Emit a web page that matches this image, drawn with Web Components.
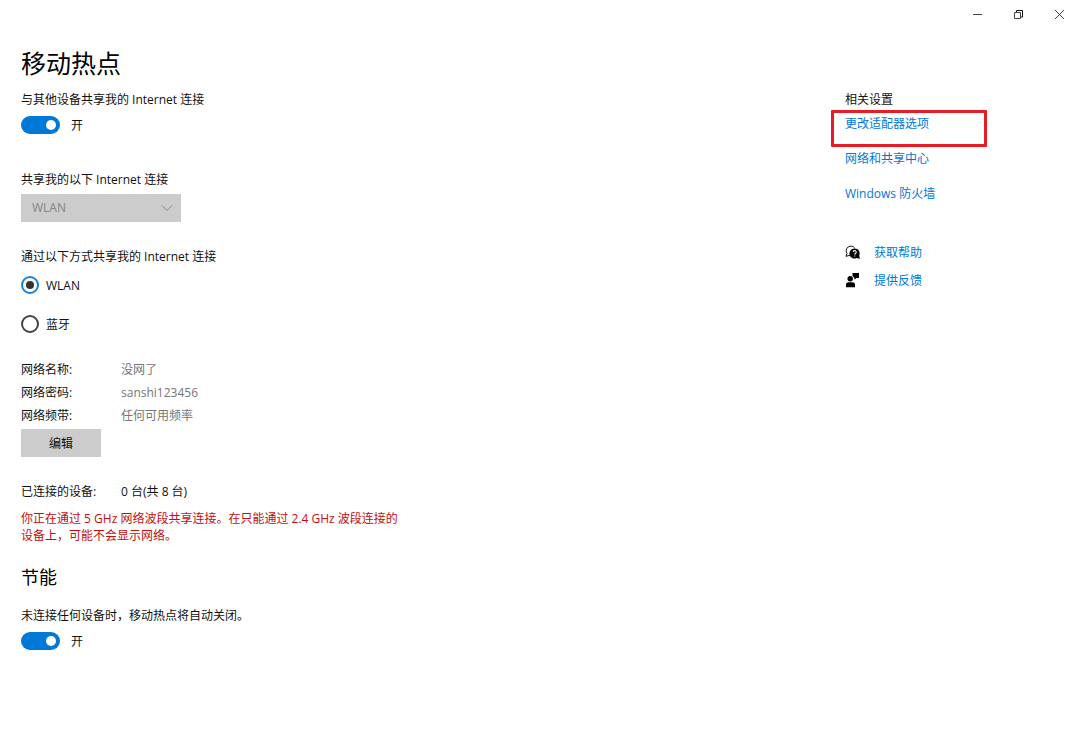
<!DOCTYPE html>
<html lang="zh-CN">
<head>
<meta charset="utf-8">
<meta name="viewport" content="width=device-width, initial-scale=1">
<title>移动热点</title>
<style>
  body { margin: 0; background: #fff; color: #111; font: 12px/16px "Open Sans", "Noto Sans CJK SC", sans-serif; }
</style>
</head>
<body>
<hotspot-page></hotspot-page>
<script>
const define = (name, html, setup) => customElements.define(name, class extends HTMLElement {
  connectedCallback() {
    if (this.shadowRoot) return;
    this.attachShadow({ mode: 'open' }).innerHTML = html;
    if (setup) setup(this, this.shadowRoot);
  }
});

define('window-bar', `
  <style>
    :host { display: flex; justify-content: flex-end; height: 28px; }
    button { width: 41px; padding: 0; border: 0; background: none; display: grid; place-items: center; }
    svg { display: block; fill: none; stroke: #444; }
  </style>
  <button aria-label="最小化"><svg width="11" height="11"><path d="M1 5.500h9"/></svg></button>
  <button aria-label="还原"><svg width="11" height="11"><path d="M1.500 3.500h6v6h-6z"/><path d="M3.500 3V1.500h6v6.500H8" stroke="#111"/></svg></button>
  <button aria-label="关闭"><svg width="11" height="11"><path d="M1 1l9 9M10 1l-9 9"/></svg></button>
`);

define('toggle-switch', `
  <style>
    :host { display: block; }
    .title { display: block; margin-bottom: 8px; }
    .row { display: flex; align-items: center; gap: 11px; height: 18px; }
    .state { padding-top: 2px; }
    input { appearance: none; width: 39px; height: 18px; margin: 0; border-radius: 9px; background: #999; display: flex; align-items: center; padding: 0 4px; box-sizing: border-box; }
    input::before { content: ""; width: 10px; height: 10px; border-radius: 50%; background: #fff; }
    input:checked { background: #0078d7; justify-content: flex-end; }
  </style>
  <label class="title" for="s"><slot></slot></label>
  <div class="row"><input id="s" type="checkbox" role="switch" checked><span class="state">开</span></div>
`);

define('drop-down', `
  <style>
    :host { display: block; }
    label { display: block; margin-bottom: 6px; }
    .box { display: grid; width: 160px; align-items: center; background: #ccc; }
    select, svg { grid-area: 1 / 1; }
    select { appearance: none; width: 100%; height: 28px; border: 0; border-radius: 0; padding: 0 11px; background: none; color: #858585; font: inherit; opacity: 1; }
    svg { justify-self: end; margin-right: 8px; fill: none; stroke: #8a8a8a; pointer-events: none; }
  </style>
  <label for="c"><slot></slot></label>
  <div class="box">
    <select id="c" disabled><option>WLAN</option></select>
    <svg width="12" height="8"><path d="M1 1.500l5 5 5-5"/></svg>
  </div>
`);

define('radio-group', `
  <style>
    :host { display: block; }
    fieldset { border: 0; margin: 0; padding: 0; min-width: 0; }
    legend { padding: 0; margin-bottom: 11px; }
    label { display: flex; align-items: center; gap: 7px; height: 18px; }
    label + label { margin-top: 21px; }
    span { padding-top: 2px; }
    input { appearance: none; width: 18px; height: 18px; margin: 0; box-sizing: border-box; border: 2px solid #444; border-radius: 50%; display: grid; place-items: center; }
    input:checked { border-color: #1683dc; }
    input:checked::before { content: ""; width: 8px; height: 8px; border-radius: 50%; background: #333; }
  </style>
  <fieldset>
    <legend><slot></slot></legend>
    <label><input type="radio" name="via" checked><span>WLAN</span></label>
    <label><input type="radio" name="via"><span>蓝牙</span></label>
  </fieldset>
`);

define('info-row', `
  <style>
    :host { display: grid; grid-template-columns: 100px 1fr; line-height: var(--row-height, 23px); }
    .value { color: var(--value-color, #767676); }
  </style>
  <span class="name"></span><span class="value"><slot></slot></span>
`, (host, root) => { root.querySelector('.name').textContent = host.getAttribute('name'); });

define('flat-button', `
  <style>
    :host { display: block; }
    button { width: 80px; height: 28px; border: 0; padding: 2px 0 0; background: #ccc; color: #111; font: inherit; }
  </style>
  <button type="button"><slot></slot></button>
`);

define('text-link', `
  <style>
    :host { display: flex; align-items: center; gap: 13px; }
    a { color: #0078d7; text-decoration: none; }
  </style>
  <slot name="icon"></slot><a href="#"><slot></slot></a>
`);

define('related-settings', `
  <style>
    :host { display: block; }
    h3 { margin: 0 0 8px; font: inherit; }
    .links { display: grid; gap: 19px; margin-bottom: 43px; }
    .marked { position: relative; }
    .marked::after { content: ""; position: absolute; left: -14px; top: -6px; width: 156px; height: 37px; box-sizing: border-box; border: 3px solid #e81c24; border-radius: 1px; pointer-events: none; }
    .support { display: grid; gap: 12px; }
    svg { width: 16px; height: 16px; display: block; }
  </style>
  <h3>相关设置</h3>
  <nav class="links">
    <text-link class="marked">更改适配器选项</text-link>
    <text-link>网络和共享中心</text-link>
    <text-link>Windows 防火墙</text-link>
  </nav>
  <nav class="support">
    <text-link>
      <svg slot="icon" viewBox="0 0 16 16"><path d="M5 10.300L1 11.300l1-2.800A4.700 4.700 0 1 1 9.800 3.200" fill="none" stroke="#111"/><path d="M9.700 3.500a5 5 0 0 1 4.500 7.200l.8 3.100-3.400-.8A5 5 0 1 1 9.700 3.500z" fill="#000"/><path d="M8.200 7.100a1.500 1.500 0 1 1 2.400 1.200c-.6.4-.8.6-.8 1.300M9.800 10.500v1.100" fill="none" stroke="#fff" stroke-width="1.100"/></svg>
      获取帮助
    </text-link>
    <text-link>
      <svg slot="icon" viewBox="0 0 16 16"><circle cx="5.200" cy="5.800" r="2.700"/><path d="M1 14.300v-2.500q0-2.500 2.500-2.500h4q2.500 0 2.500 2.500v2.500zM7.500 0H14v5h-2.500L9.500 6.700V5L7.500 3z"/></svg>
      提供反馈
    </text-link>
  </nav>
`);

define('hotspot-page', `
  <style>
    :host { display: block; }
    .layout { display: grid; grid-template-columns: minmax(0, 1fr) 235px; padding: 19px 0 20px 21px; }
    h1 { margin: 0 0 13px; font-size: 25px; line-height: 32px; font-weight: 400; color: #000; }
    h2 { margin: 21px 0 19px; font-size: 18px; line-height: 24px; font-weight: 400; color: #000; }
    drop-down { margin: 38px 0 27px; }
    .details { margin: 25px 0 2px; }
    .connected { margin: 27px 0 10px; --row-height: 16px; --value-color: #111; }
    .warning { margin: 0; max-width: 382px; line-height: 17px; color: #c50f0f; }
    related-settings { margin-top: 45px; }
  </style>
  <window-bar></window-bar>
  <div class="layout">
    <main>
      <h1>移动热点</h1>
      <toggle-switch>与其他设备共享我的 Internet 连接</toggle-switch>
      <drop-down>共享我的以下 Internet 连接</drop-down>
      <radio-group>通过以下方式共享我的 Internet 连接</radio-group>
      <div class="details">
        <info-row name="网络名称:">没网了</info-row>
        <info-row name="网络密码:">sanshi123456</info-row>
        <info-row name="网络频带:">任何可用频率</info-row>
      </div>
      <flat-button>编辑</flat-button>
      <info-row class="connected" name="已连接的设备:">0 台(共 8 台)</info-row>
      <p class="warning">你正在通过 5 GHz 网络波段共享连接。在只能通过 2.4 GHz 波段连接的设备上，可能不会显示网络。</p>
      <h2>节能</h2>
      <toggle-switch>未连接任何设备时，移动热点将自动关闭。</toggle-switch>
    </main>
    <related-settings></related-settings>
  </div>
`);
</script>
</body>
</html>
